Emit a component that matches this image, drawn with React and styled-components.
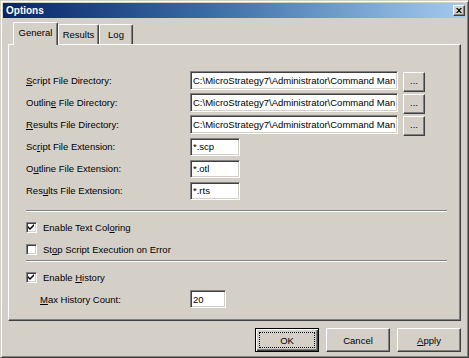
import React from "react";
import styled, { createGlobalStyle } from "styled-components";

const GlobalStyle = createGlobalStyle`
  html, body {
    margin: 0;
    padding: 0;
    background: #d4d0c8;
  }
  * {
    box-sizing: border-box;
  }
`;

const FACE = "#d4d0c8";
const SHADOW = "#808080";
const DARK = "#404040";

const dirValue = "C:\\MicroStrategy7\\Administrator\\Command Manager\\Scripts";

const Window = styled.div`
  width: 469px;
  height: 358px;
  background: ${FACE};
  border: 1px solid;
  border-color: ${FACE} ${DARK} ${DARK} ${FACE};
  box-shadow: inset 1px 1px #fff, inset -1px -1px ${SHADOW};
  padding: 2px;
  display: flex;
  flex-direction: column;
  font-family: "Liberation Sans", Arial, sans-serif;
  font-size: 9.5px;
  color: #000;
`;

const TitleBar = styled.div`
  height: 15px;
  flex: none;
  display: flex;
  align-items: center;
  justify-content: space-between;
  padding: 0 1px 0 3px;
  background: linear-gradient(to right, #0a246a 0%, #3a6ea5 45%, #a6caf0 100%);
`;

const Title = styled.span`
  color: #fff;
  font-weight: bold;
  font-size: 10px;
`;

const CloseButton = styled.div`
  width: 12px;
  height: 11px;
  background: ${FACE};
  border: 1px solid;
  border-color: #fff ${DARK} ${DARK} #fff;
  box-shadow: inset -1px -1px ${SHADOW};
  display: flex;
  align-items: center;
  justify-content: center;
`;

const Content = styled.div`
  flex: 1;
  display: flex;
  flex-direction: column;
  padding: 4px 5px 3px 5px;
`;

const TabStrip = styled.div`
  height: 22px;
  flex: none;
  display: flex;
  align-items: flex-end;
  padding-left: 5px;
`;

const Tab = styled.div`
  position: relative;
  z-index: ${(p) => (p.$active ? 2 : 1)};
  width: ${(p) => p.$w}px;
  height: ${(p) => (p.$active ? 23 : 20)}px;
  margin-bottom: ${(p) => (p.$active ? -1 : 0)}px;
  padding-bottom: ${(p) => (p.$active ? 3 : 0)}px;
  display: flex;
  align-items: center;
  justify-content: center;
  background: ${FACE};
  border-top: 1px solid #fff;
  border-left: 1px solid #fff;
  border-right: 1px solid ${DARK};
  border-radius: 2px 2px 0 0;
  box-shadow: inset -1px 0 ${SHADOW};
`;

const Panel = styled.div`
  flex: 1;
  border: 1px solid;
  border-color: #fff ${DARK} ${DARK} #fff;
  box-shadow: inset -1px -1px ${SHADOW};
  padding: 26px 13px 0 17px;
  display: flex;
  flex-direction: column;
`;

const FormGrid = styled.div`
  display: grid;
  grid-template-columns: 164px 208px 27px;
  grid-auto-rows: 19px;
  row-gap: 3px;
  align-items: center;
`;

const Label = styled.label`
  white-space: nowrap;
  width: ${(p) => (p.$w ? `${p.$w}px` : "auto")};
  padding-left: ${(p) => p.$indent || 0}px;
`;

const Field = styled.input`
  width: ${(p) => p.$w}px;
  height: ${(p) => p.$h || 19}px;
  border: 1px solid;
  border-color: ${SHADOW} #fff #fff ${SHADOW};
  box-shadow: inset 1px 1px ${DARK}, inset -1px -1px ${FACE};
  background: #fff;
  font-family: inherit;
  font-size: 9.5px;
  color: #000;
  padding: 0 2px;
  outline: none;
  margin: 0;
`;

const Browse = styled.button`
  align-self: start;
  justify-self: end;
  width: 22px;
  height: 20px;
  margin-top: 1px;
  padding: 0 0 4px 0;
  background: ${FACE};
  border: 1px solid;
  border-color: #fff ${DARK} ${DARK} #fff;
  box-shadow: inset -1px -1px ${SHADOW};
  font-family: inherit;
  font-size: 9.5px;
  color: #000;
`;

const Separator = styled.div`
  height: 2px;
  margin-top: ${(p) => p.$top}px;
  border-top: 1px solid ${SHADOW};
  border-bottom: 1px solid #fff;
`;

const Group = styled.div`
  display: flex;
  flex-direction: column;
  padding-top: ${(p) => p.$top}px;
`;

const CheckRow = styled.div`
  height: 22px;
  display: flex;
  align-items: center;
  gap: 6px;
`;

const Box = styled.span`
  width: 11px;
  height: 11px;
  flex: none;
  background: #fff;
  border: 1px solid;
  border-color: ${SHADOW} #fff #fff ${SHADOW};
  box-shadow: inset 1px 1px ${DARK}, inset -1px -1px ${FACE};
  display: flex;
  align-items: center;
  justify-content: center;
`;

const FieldRow = styled.div`
  height: 22px;
  display: flex;
  align-items: center;
`;

const ButtonRow = styled.div`
  flex: none;
  margin-top: 7px;
  display: flex;
  justify-content: flex-end;
  gap: 7px;
`;

const DialogButton = styled.button`
  position: relative;
  width: 64px;
  height: 24px;
  margin: 0;
  padding: 0;
  background: ${FACE};
  font-family: inherit;
  font-size: 9.5px;
  color: #000;
  border: 1px solid;
  border-color: ${(p) => (p.$default ? "#000" : `#fff ${DARK} ${DARK} #fff`)};
  box-shadow: ${(p) =>
    p.$default
      ? `inset 1px 1px #fff, inset -1px -1px ${DARK}, inset -2px -2px ${SHADOW}`
      : `inset -1px -1px ${SHADOW}`};

  &::after {
    content: "";
    display: ${(p) => (p.$default ? "block" : "none")};
    position: absolute;
    inset: 3px;
    border: 1px dotted #000;
  }
`;

const Check = () => (
  <svg width="7" height="7" viewBox="0 0 7 7">
    <path d="M0 2 L2 4 L6 0 L6 2 L2 6 L0 4 Z" fill="#000" />
  </svg>
);

const CloseGlyph = () => (
  <svg width="6" height="5" viewBox="0 0 6 5">
    <path d="M0 0 L1.5 0 L3 1.6 L4.5 0 L6 0 L3.8 2.5 L6 5 L4.5 5 L3 3.4 L1.5 5 L0 5 L2.2 2.5 Z" fill="#000" />
  </svg>
);

const rows = [
  { label: <><u>S</u>cript File Directory:</>, value: dirValue, dir: true },
  { label: <>Outlin<u>e</u> File Directory:</>, value: dirValue, dir: true },
  { label: <><u>R</u>esults File Directory:</>, value: dirValue, dir: true },
  { label: <>Sc<u>r</u>ipt File Extension:</>, value: "*.scp" },
  { label: <>O<u>u</u>tline File Extension:</>, value: "*.otl" },
  { label: <>Res<u>u</u>lts File Extension:</>, value: "*.rts" },
];

export default function App() {
  return (
    <>
      <GlobalStyle />
      <Window>
        <TitleBar>
          <Title>Options</Title>
          <CloseButton>
            <CloseGlyph />
          </CloseButton>
        </TitleBar>
        <Content>
          <TabStrip>
            <Tab $active $w={45}>General</Tab>
            <Tab $w={41}>Results</Tab>
            <Tab $w={34}>Log</Tab>
          </TabStrip>
          <Panel>
            <FormGrid>
              {rows.map((r, i) => (
                <React.Fragment key={i}>
                  <Label>{r.label}</Label>
                  <Field
                    readOnly
                    value={r.value}
                    $w={r.dir ? 208 : 50}
                    $h={r.dir ? 19 : 18}
                  />
                  {r.dir ? <Browse>...</Browse> : <span />}
                </React.Fragment>
              ))}
            </FormGrid>

            <Separator $top={10} />
            <Group $top={4}>
              <CheckRow>
                <Box><Check /></Box>
                <span>Enable Text Col<u>o</u>ring</span>
              </CheckRow>
              <CheckRow>
                <Box />
                <span>St<u>o</u>p Script Execution on Error</span>
              </CheckRow>
            </Group>

            <Separator $top={0} />
            <Group $top={4}>
              <CheckRow>
                <Box><Check /></Box>
                <span>Enable <u>H</u>istory</span>
              </CheckRow>
              <FieldRow>
                <Label $w={164} $indent={14}>
                  <u>M</u>ax History Count:
                </Label>
                <Field readOnly value="20" $w={36} $h={18} />
              </FieldRow>
            </Group>
          </Panel>
          <ButtonRow>
            <DialogButton $default>OK</DialogButton>
            <DialogButton>Cancel</DialogButton>
            <DialogButton>
              <u>A</u>pply
            </DialogButton>
          </ButtonRow>
        </Content>
      </Window>
    </>
  );
}
